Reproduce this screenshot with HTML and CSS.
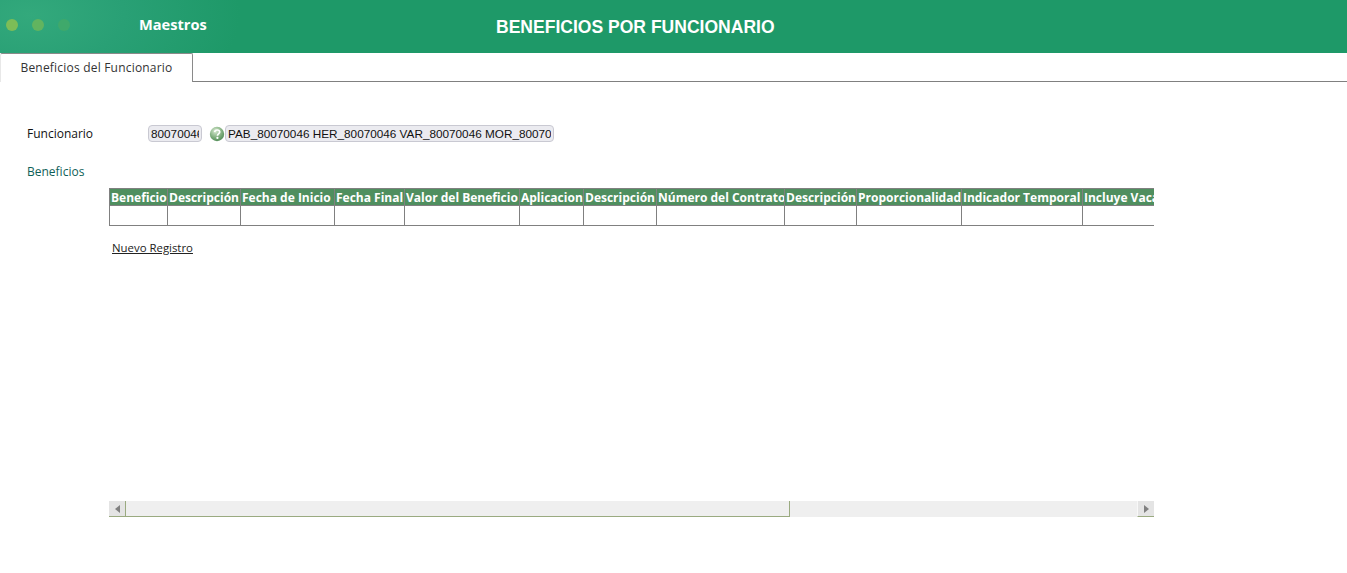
FILE: index.html
```html
<!DOCTYPE html>
<html lang="es">
<head>
<meta charset="utf-8">
<title>Beneficios por Funcionario</title>
<link rel="stylesheet" href="styles.css">
</head>
<body>
<header class="topbar">
  <div class="dots"><span class="dot d1"></span><span class="dot d2"></span><span class="dot d3"></span></div>
  <div class="module">Maestros</div>
  <h1 class="title">BENEFICIOS POR FUNCIONARIO</h1>
</header>
<nav class="tabs"><div class="tab">Beneficios del Funcionario</div></nav>
<main class="content">
  <div class="field-row">
    <label class="label">Funcionario</label>
    <input class="input code" value="80070046" readonly>
    <svg class="help" viewBox="0 0 16 16" width="16" height="16" aria-hidden="true">
      <defs><radialGradient id="g" cx="40%" cy="30%" r="75%"><stop offset="0" stop-color="#d9ead2"/><stop offset="0.6" stop-color="#7fae7d"/><stop offset="1" stop-color="#4f8a55"/></radialGradient></defs>
      <circle cx="8" cy="8" r="7.2" fill="url(#g)"/>
      <path d="M5.6 6.2C5.8 4.6 7 4 8.2 4c1.5 0 2.5.9 2.5 2.1 0 1.8-2.2 1.9-2.2 3.6" fill="none" stroke="#fff" stroke-width="1.7"/>
      <circle cx="8.4" cy="11.9" r="1.1" fill="#fff"/>
    </svg>
    <input class="input name" value="PAB_80070046 HER_80070046 VAR_80070046 MOR_80070" readonly>
  </div>
  <div class="section-label">Beneficios</div>
  <section class="grid-pane">
    <div class="grid-body">
      <table class="grid">
        <thead>
          <tr>
            <th class="c1">Beneficio</th><th class="c2">Descripción</th><th class="c3">Fecha de Inicio</th><th class="c4">Fecha Final</th><th class="c5">Valor del Beneficio</th><th class="c6">Aplicacion</th><th class="c7">Descripción</th><th class="c8">Número del Contrato</th><th class="c9">Descripción</th><th class="c10">Proporcionalidad</th><th class="c11">Indicador Temporal</th><th class="c12">Incluye Vacaciones</th>
          </tr>
        </thead>
        <tbody>
          <tr><td></td><td></td><td></td><td></td><td></td><td></td><td></td><td></td><td></td><td></td><td></td><td></td></tr>
        </tbody>
      </table>
      <a class="new-link" href="#">Nuevo Registro</a>
    </div>
    <div class="scrollbar">
      <div class="arrow"><span class="tri left"></span></div>
      <div class="track"><div class="thumb"></div></div>
      <div class="arrow end"><span class="tri right"></span></div>
    </div>
  </section>
</main>
</body>
</html>
```
FILE: styles.css
```css
* { box-sizing: border-box; }
html, body { margin: 0; padding: 0; background: #fff; }
body { width: 1347px; height: 573px; overflow: hidden; font-family: "Open Sans", "Liberation Sans", sans-serif; font-size: 12px; color: #222; }

.topbar { height: 53px; display: flex; align-items: center; background: radial-gradient(ellipse 210px 110px at 30px 15px, #33a97c 0%, #29a075 45%, #1e9968 100%); background-color: #1e9968; }
.dots { display: flex; gap: 14px; margin-left: 6px; width: 133px; margin-top: -3px; flex: none; }
.dot { width: 12px; height: 12px; border-radius: 50%; }
.d1 { background: #7dbd57; }
.d2 { background: #62b45f; }
.d3 { background: #3fa96b; }
.module { width: 357px; flex: none; color: #fff; font-weight: 700; font-size: 14.6px; margin-top: -6px; }
.title { margin: 1px 0 0; color: #fff; font-family: "Liberation Sans", Arial, sans-serif; font-weight: 700; font-size: 17.55px; }

.tabs { height: 29px; border-bottom: 1px solid #808080; display: flex; }
.tab { width: 193px; height: 29px; background: #fff; border: 1px solid #8a8a8a; border-bottom: 0; border-left-color: #e8e8e8; border-radius: 2px 2px 0 0; text-align: center; line-height: 27px; color: #333; letter-spacing: .2px; }

.content { padding: 43px 0 0 27px; }
.field-row { display: flex; align-items: center; height: 17px; }
.label { width: 121px; flex: none; color: #111; }
.input { height: 17px; padding: 0 2px; border: 1px solid #c9c9d2; border-radius: 4px; background: #ebebf0; font-family: "Liberation Sans", Arial, sans-serif; font-size: 11.75px; color: #111; outline: none; }
.code { width: 54px; }
.help { margin: 0 0 0 7px; flex: none; }
.name { width: 329px; }
.section-label { margin-top: 21px; height: 17px; line-height: 17px; color: #0f5f58; }

.grid-pane { margin: 8px 0 0 82px; width: 1045px; height: 329px; display: flex; flex-direction: column; }
.grid-body { flex: 1; overflow: hidden; }
.grid { border-collapse: collapse; table-layout: fixed; width: 1090px; }
.grid th { background: #4f8f5f; color: #fff; font-family: "Open Sans", "Liberation Sans", sans-serif; font-size: 12px; font-weight: 700; height: 17px; line-height: 15px; padding: 1px 1px 0; text-align: left; white-space: nowrap; overflow: hidden; border: 1px solid #808080; border-bottom: 0; }
.grid td { height: 20px; background: #fff; border: 1px solid #808080; }
.c1 { width: 58px; } .c2 { width: 73px; } .c3 { width: 94px; } .c4 { width: 70px; }
.c5 { width: 115px; } .c6 { width: 64px; } .c7 { width: 73px; } .c8 { width: 128px; }
.c9 { width: 72px; } .c10 { width: 105px; } .c11 { width: 121px; } .c12 { width: 117px; }
.new-link { display: inline-block; margin: 14px 0 0 3px; color: #222; font-size: 11.4px; text-decoration: underline; }

.scrollbar { height: 16px; display: flex; background: #efefef; }
.arrow { width: 17px; flex: none; background: #e4e4e4; border-right: 1px solid #9aaa80; border-bottom: 1px solid #9aaa80; display: flex; align-items: center; justify-content: center; }
.arrow.end { border-left: 1px solid #f8f8f8; border-right: 0; }
.tri { width: 0; height: 0; border-top: 4px solid transparent; border-bottom: 4px solid transparent; }
.tri.left { border-right: 5px solid #808080; }
.tri.right { border-left: 5px solid #808080; }
.track { flex: 1; }
.thumb { width: 664px; height: 16px; background: #efefef; border-right: 1px solid #9aaa80; border-bottom: 1px solid #9aaa80; }
```
